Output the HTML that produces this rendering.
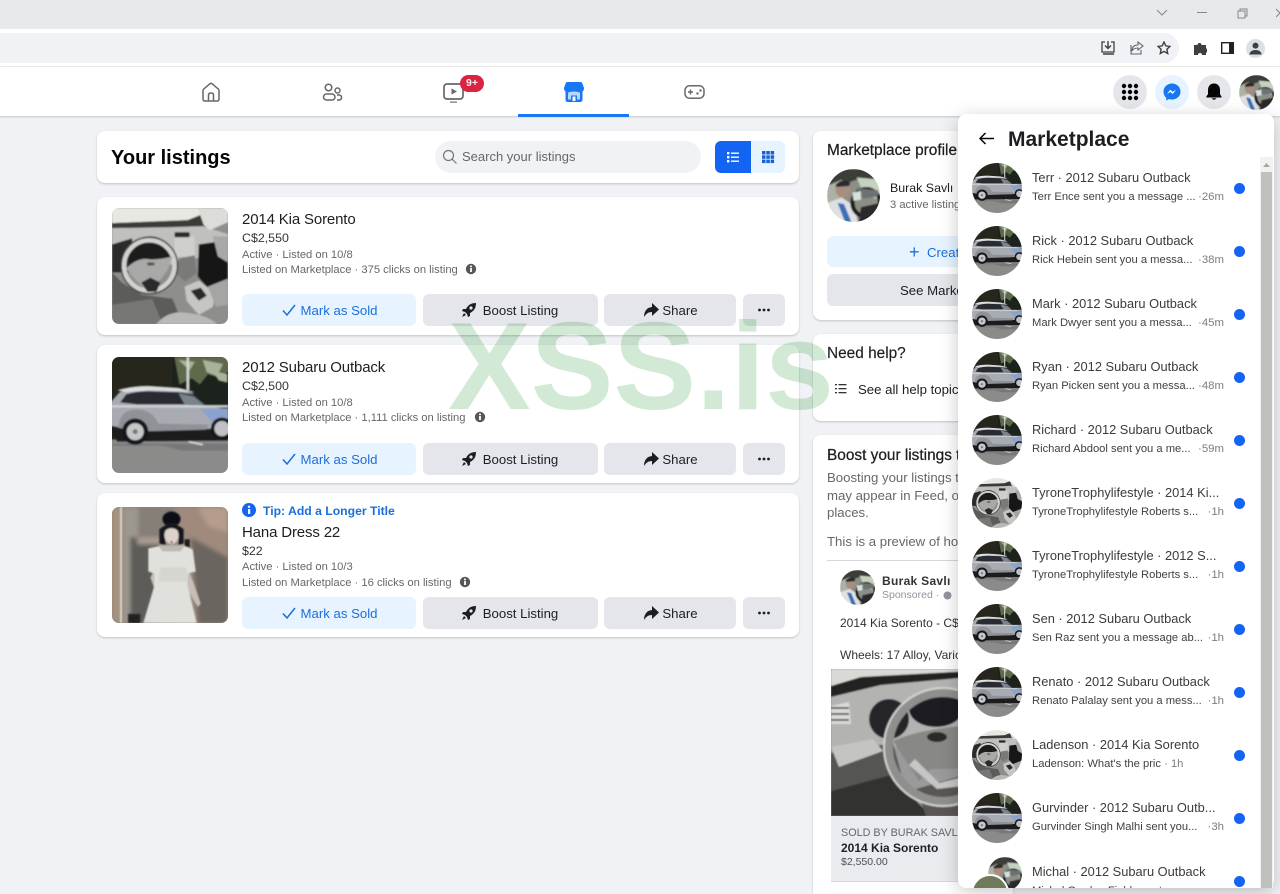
<!DOCTYPE html>
<html lang="en"><head><meta charset="utf-8"><title>Your listings</title>
<style>
html,body{margin:0;padding:0;width:1280px;height:894px;overflow:hidden}
body{position:relative;background:#f0f2f5;font-family:"Liberation Sans",sans-serif;color:#1c1e21}
.a{position:absolute}
.t{position:absolute;white-space:nowrap}
.card{position:absolute;background:#fff;border-radius:8px;box-shadow:0 1px 2px rgba(0,0,0,.2)}
.img{position:absolute;width:116px;height:116px;border-radius:7px;overflow:hidden;left:112px}
.btn{position:absolute;height:32px;border-radius:6px;background:#e4e6eb;font-size:13.2px;line-height:34px;text-align:center;white-space:nowrap;color:#1c1e21}
.blue{background:#e7f3ff;color:#1b6fdc}
.bm{width:174px;left:242px}.bb{width:175px;left:423px}.bs{width:132px;left:604px}.bx{width:42px;left:743px}
.btn svg{position:absolute;top:8px}
.ti{font-size:15px;letter-spacing:-.15px;line-height:18px;color:#1c1e21;left:242px}
.pr{font-size:12.4px;line-height:16px;left:242px;color:#33353a}
.me{font-size:11.2px;line-height:14px;left:242px;color:#65676b}
.h{font-size:15.4px;line-height:18px;-webkit-text-stroke:.25px #1c1e21;left:827px}
.g{font-size:13.2px;line-height:17px;color:#65676b;left:827px}
.av{position:absolute;left:972px;width:50px;height:50px;border-radius:50%;overflow:hidden}
.rt{position:absolute;left:1032px;font-size:12.85px;line-height:16px;white-space:nowrap;color:#3a3b3d}
.rs{position:absolute;left:1032px;font-size:11.2px;line-height:14px;white-space:nowrap;color:#3f4145}
.rm{position:absolute;right:56px;font-size:11.4px;line-height:14px;color:#7a7c80;white-space:nowrap}
.dot{position:absolute;left:1234px;width:11px;height:11px;border-radius:50%;background:#1464f4}
svg{display:block}
</style></head><body>

<svg width="0" height="0" style="position:absolute">
<defs>
<filter id="b" x="-5%" y="-5%" width="110%" height="110%"><feGaussianBlur stdDeviation=".7"/></filter>
<filter id="c" x="-5%" y="-5%" width="110%" height="110%"><feGaussianBlur stdDeviation="2"/></filter>
<symbol id="car" viewBox="0 0 115 115"><g filter="url(#b)">
<rect x="-3" y="-3" width="121" height="121" fill="#1e201b"/>
<path d="M0 0h60v30l-60 12z" fill="#25261f"/>
<path d="M62 0h55v14l-12 6-10-3-8 10-8-6-12 6z" fill="#5f6a4d"/>
<path d="M66 3l16 2-5 8zM90 3l20 4-6 12-10-4zM100 14l14 3v8l-8-2z" fill="#aab29a"/>
<rect x="74" y="0" width="2.4" height="33" fill="#d8d8d2"/>
<rect x="-3" y="82" width="121" height="36" fill="#8b8b8a"/>
<path d="M0 86h115v7H70L50 88H0z" fill="#77787a"/>
<path d="M76 84l14 3" stroke="#ddd" stroke-width="1.6"/>
<path d="M0 72h115v11l-110 1z" fill="#1b1b1e"/>
<path d="M-2 46l10-11q10-4 26-4l32 1 14 4 13 12 22 4v14l-12 5-76 2-29-5z" fill="#a8acb2"/>
<path d="M88 52l27-1v14l-12 3z" fill="#8aa3ce"/>
<path d="M-2 48h117v2H-2z" fill="#d3d5d8"/>
<path d="M8 45l6-8q10-3 22-3l30 1 16 2 12 11-24-1-45 0z" fill="#2a2b30"/>
<path d="M66 36l15 3 11 9-20-1z" fill="#78838c"/>
<path d="M6 33q14-4 30-4l30 2 16 4-16-1-30-1-22 2z" fill="#dcdee0"/>
<path d="M6 70q2-18 18-18t22 14l50 1 1-2-4 7-70 2z" fill="#8f9297"/>
<circle cx="23" cy="74" r="13" fill="#17171a"/><circle cx="23" cy="74" r="8.5" fill="#c5c7c9"/><circle cx="23" cy="74" r="2.5" fill="#777"/>
<circle cx="109" cy="71" r="11" fill="#17171a"/><circle cx="109" cy="71" r="7.5" fill="#bfc1c4"/>
</g></symbol>

<symbol id="int" viewBox="0 0 115 115"><g filter="url(#b)">
<rect x="-3" y="-3" width="121" height="121" fill="#8e8e8c"/>
<path d="M0 0h105L75 12 0 15z" fill="#e8e8e2"/>
<path d="M0 15l75-3 30-12h10v10L95 20l-40 3L0 22z" fill="#3a3a38"/>
<path d="M0 20l60-1 30-1 25 8v18l-25 4-30 8L0 58z" fill="#c0c0be"/>
<path d="M85 0h30v14l-18 8-6-5z" fill="#dcdcd9"/>
<path d="M0 36l20-6v34H0z" fill="#2a2a2a"/>
<path d="M14 46q6-16 23-18 16 0 24 16l-6 16H20z" fill="#1e1e1e"/>
<rect x="62" y="28" width="20" height="20" rx="2" fill="#cfcfcc"/><rect x="62" y="24" width="15" height="5" rx="1" fill="#2b2b2b"/>
<path d="M66 50l16-3 2 18-12 8-8-8z" fill="#7a7a78"/>
<path d="M86 36l29-4v54l-18-4-12-14z" fill="#141414"/>
<path d="M100 28h15v26l-10-6z" fill="#a8a8a6"/>
<path d="M72 78l14-6 16 12-2 14-14 8-12-14z" fill="#c6c6c3"/>
<path d="M78 82l10-3 6 8-8 5z" fill="#2a2a2a"/>
<path d="M95 78l20-8v26l-12 2z" fill="#a5a5a2"/>
<path d="M0 64l10 10 20 12 30 4 10 25H0z" fill="#5c5c5a"/>
<path d="M0 96l40-6 10 25H0z" fill="#777775"/>
<path d="M44 115q12-14 30-11 20 2 30 11z" fill="#b9b9b6"/>
<circle cx="37" cy="57" r="25" fill="none" stroke="#d2d2cf" stroke-width="4.500"/>
<circle cx="37" cy="57" r="28" fill="none" stroke="#3c3c3c" stroke-width="1.400"/>
<path d="M14 60q12-12 24-9 12 0 22-3l-5 14-13 17H31L22 70z" fill="#a9a9a7"/>
<path d="M29 74l6 9h9l4-9-10-5z" fill="#2a2a2a"/>
<rect x="35" y="54" width="7" height="3" fill="#555"/>
</g></symbol>

<symbol id="dress" viewBox="0 0 115 115"><rect x="-3" y="-3" width="121" height="121" fill="#8f8278"/>
<g filter="url(#c)">
<path d="M0 0h9v115H0z" fill="#a8927f"/>
<path d="M11 0h18v115H11z" fill="#9c978f"/>
<path d="M18 30h32v85H18z" fill="#5d5c59"/>
<path d="M26 0h36v32H26z" fill="#857f78"/>
<path d="M25 30h28v7H25z" fill="#ab9d91"/>
<path d="M62 0h53v115H62z" fill="#a08a7c"/>
<path d="M78 30l37 20v65H85z" fill="#6a655e"/>
<path d="M85 0h30v25l-20-6z" fill="#b59c8b"/>
</g>
<g filter="url(#b)">
<rect x="8" y="0" width="1.800" height="115" fill="#e0ded9"/>
<rect x="16" y="106" width="12" height="9" fill="#222220"/>
<rect x="72" y="32" width="5" height="8" fill="#1a1a1a"/>
<ellipse cx="59" cy="12" rx="9" ry="7.500" fill="#111115"/>
<path d="M47 36V22q12-10 24 0v14l-5 2V30H53v8z" fill="#15151a"/>
<ellipse cx="59" cy="28" rx="7" ry="9" fill="#dbd2cc"/>
<path d="M52 24q7-6 14 0l-2-8h-10z" fill="#15151a"/>
<circle cx="59" cy="35" r="1.200" fill="#8a3f3f"/>
<path d="M44 58l-6 12 8 22 4-2-5-20z" fill="#c6beb8"/><path d="M74 58l8 20 6 18-3 3-12-20z" fill="#c6beb8"/>
<path d="M36 41l14-3h20l10 4 3 22-8 2 0 12 9 37H31l11-37 0-12-6-2z" fill="#e0e0dc"/>
<path d="M46 38h26l-4 6H50z" fill="#bcb9b4"/>
<path d="M48 60h26v14H46z" fill="#d6d6d1"/>
</g></symbol>

<symbol id="me" viewBox="0 0 50 50"><g filter="url(#b)">
<rect width="50" height="50" fill="#8c8f85"/>
<path d="M0 0h50v14L28 10 0 20z" fill="#3b3d38"/>
<path d="M28 8l22 2v20l-16-8z" fill="#c6d2c0"/>
<path d="M0 16l14-6v34H0z" fill="#aeb1a6"/>
<ellipse cx="15" cy="19" rx="7" ry="8" fill="#a88e7e"/>
<path d="M8 15q6-7 14-2l-1 3-12 1z" fill="#2b2b2a"/>
<path d="M0 32l14-5 12 8 3 15H0z" fill="#dfe0e2"/>
<path d="M10 32l6 1 7 17h-6z" fill="#3b6fb8"/>
<circle cx="37" cy="32" r="13" fill="none" stroke="#1d1d1f" stroke-width="4"/>
<path d="M28 18l20 2v6l-14 2z" fill="#6d7270"/>
<path d="M32 36l18-4v18H30z" fill="#2a2a2a"/>
<path d="M24 22l8-1v8l-7 1z" fill="#d7e0dd"/>
</g></symbol>

<symbol id="rocket" viewBox="0 0 16 16"><path d="M15 1c-5 0-8 2-10 6H2L1 9l3 1 2 2 1 3 2-1V11c4-2 6-5 6-10z" fill="#1c1e21"/><circle cx="10" cy="6" r="1.6" fill="#e4e6eb"/><path d="M3 11l-2 4 4-2z" fill="#1c1e21"/></symbol>
<symbol id="share" viewBox="0 0 16 16"><path d="M9 1l7 6.5L9 14v-4C5 10 3 12 1 15c0-6 3-9.500 8-10z" fill="#1c1e21"/></symbol>
<symbol id="check" viewBox="0 0 16 16"><path d="M2 8.500l4 4.500 8-10" fill="none" stroke="#1b6fdc" stroke-width="1.500"/></symbol>
<symbol id="dots" viewBox="0 0 16 16"><circle cx="3.500" cy="8" r="1.400" fill="#1c1e21"/><circle cx="8" cy="8" r="1.400" fill="#1c1e21"/><circle cx="12.500" cy="8" r="1.400" fill="#1c1e21"/></symbol>
<symbol id="info" viewBox="0 0 12 12"><circle cx="6" cy="6" r="5.200" fill="#55575c"/><rect x="5.100" y="5" width="1.800" height="4" fill="#fff"/><circle cx="6" cy="3.400" r="1" fill="#fff"/></symbol>
</defs></svg>

<!-- browser chrome -->
<div class="a" style="left:0;top:0;width:1280px;height:29px;background:#e7e9ec"></div>
<div class="a" style="left:0;top:29px;width:1280px;height:38px;background:#fff"></div>
<div class="a" style="left:-20px;top:33px;width:1199px;height:30px;background:#f0f2f5;border-radius:15px"></div>
<div class="a" style="left:0;top:66px;width:1280px;height:1px;background:#ececec"></div>
<svg class="a" style="left:1155px;top:8px" width="14" height="10"><path d="M2 2l5 5 5-5" fill="none" stroke="#85878b" stroke-width="1"/></svg>
<div class="a" style="left:1197px;top:12px;width:10px;height:1px;background:#85878b"></div>
<svg class="a" style="left:1236px;top:7px" width="12" height="12"><path d="M2 4h7v7H2zM4 4V2h7v7H9" fill="none" stroke="#85878b"/></svg>
<svg class="a" style="left:1276px;top:8px" width="4" height="10"><path d="M0 1l8 8M0 9l8-8" fill="none" stroke="#85878b"/></svg>
<svg class="a" style="left:1100px;top:40px" width="16" height="16"><path d="M5 2H2v10h12V2h-3" fill="none" stroke="#3c4043" stroke-width="1.300"/><path d="M8 1v7M5 5.500L8 8.500l3-3M3 14h11" fill="none" stroke="#3c4043" stroke-width="1.400"/></svg>
<svg class="a" style="left:1129px;top:41px" width="16" height="15"><path d="M9 1l5 4-5 4V7C6 7 4 8 3 10c0-4 2-6 6-6zM2 4v9h10V9" fill="none" stroke="#5f6368" stroke-width="1.100"/></svg>
<svg class="a" style="left:1157px;top:41px" width="14" height="14"><path d="M7 1l1.800 3.900 4.200.5-3.100 2.900.8 4.200L7 10.400 3.300 12.500l.8-4.200L1 5.400l4.200-.5z" fill="none" stroke="#3c4043" stroke-width="1.400"/></svg>
<svg class="a" style="left:1193px;top:41px" width="14" height="14"><path d="M1 4h3.500a2 2 0 1 1 4 0H13v3.500a2 2 0 1 1 0 4V14H9a2 2 0 1 0-4 0H1z" fill="#3c4043"/></svg>
<svg class="a" style="left:1221px;top:42px" width="13" height="12"><rect x=".7" y=".7" width="11.600" height="10.600" fill="none" stroke="#222" stroke-width="1.400"/><rect x="8" y="1" width="4" height="10" fill="#222"/></svg>
<div class="a" style="left:1246px;top:39px;width:19px;height:19px;border-radius:50%;background:#dcdfe3"></div>
<svg class="a" style="left:1249px;top:42px" width="13" height="13"><circle cx="6.500" cy="3.600" r="3" fill="#3c4043"/><path d="M.5 12.500c0-6 12-6 12 0z" fill="#3c4043"/></svg>

<!-- nav -->
<div class="a" style="left:0;top:67px;width:1280px;height:49px;background:#fff;box-shadow:0 1px 2px rgba(0,0,0,.18)"></div>
<svg class="a" style="left:201px;top:82px" width="20" height="20"><path d="M2 17V8.500Q2 7.500 3 6.800L8.800 1.800Q10 1 11.200 1.800L17 6.800Q18 7.500 18 8.500V17Q18 19 16 19H4Q2 19 2 17ZM7.500 19v-6q0-2 2.500-2t2.500 2v6" fill="none" stroke="#65676b" stroke-width="1.500"/></svg>
<svg class="a" style="left:322px;top:83px" width="21" height="18"><circle cx="6.500" cy="4.500" r="3.300" fill="none" stroke="#65676b" stroke-width="1.500"/><circle cx="15.500" cy="7.500" r="2.500" fill="none" stroke="#65676b" stroke-width="1.500"/><rect x="1.500" y="11" width="11.500" height="6" rx="3" fill="none" stroke="#65676b" stroke-width="1.500"/><path d="M15 12h2q2.500 0 2.500 2.500T17 17h-2" fill="none" stroke="#65676b" stroke-width="1.500"/></svg>
<svg class="a" style="left:442px;top:82px" width="24" height="22"><rect x="2" y="2" width="19" height="15" rx="3" fill="none" stroke="#65676b" stroke-width="1.700"/><path d="M9.500 6.500l5.500 3-5.500 3z" fill="#65676b"/><rect x="8" y="19.300" width="7" height="1.700" fill="#9a9b9e"/></svg>
<div class="a" style="left:460px;top:75px;width:24px;height:17px;border-radius:9px;background:#dc2340;color:#f2f2f2;font-size:10.500px;font-weight:bold;line-height:17px;text-align:center">9+</div>
<svg class="a" style="left:564px;top:82px" width="20" height="20"><path d="M3.500 0H16.500Q17.800 0 18.300 1.200L20 6Q20 10 16.500 10H3.500Q0 10 0 6L1.700 1.200Q2.200 0 3.500 0Z" fill="#1877f2"/><path d="M1.500 9H18.500V17.500Q18.500 20 16 20H4Q1.500 20 1.500 17.500Z" fill="#1877f2"/><path d="M4 10.500q6-2 12 0V17.500H13V13.500H7V17.500H4z" fill="#b7d5fa"/><path d="M8.500 19v-4.500h3V19" fill="#f5f9ff"/></svg>
<div class="a" style="left:518px;top:114px;width:111px;height:3px;background:#1877f2"></div>
<svg class="a" style="left:684px;top:85px" width="21" height="14"><rect x="1" y=".8" width="19" height="12.400" rx="4.500" fill="none" stroke="#65676b" stroke-width="1.500"/><path d="M4 7h5M6.500 4.500v5" stroke="#65676b" stroke-width="1.400"/><circle cx="13.500" cy="8.500" r="1.200" fill="#65676b"/><circle cx="16.500" cy="5.500" r="1.200" fill="#65676b"/></svg>

<!-- top right buttons -->
<div class="a" style="left:1113px;top:75px;width:34px;height:34px;border-radius:50%;background:#e4e6eb"></div>
<svg class="a" style="left:1121px;top:83px" width="18" height="18" fill="#050505"><circle cx="3" cy="3" r="2.200"/><circle cx="9" cy="3" r="2.200"/><circle cx="15" cy="3" r="2.200"/><circle cx="3" cy="9" r="2.200"/><circle cx="9" cy="9" r="2.200"/><circle cx="15" cy="9" r="2.200"/><circle cx="3" cy="15" r="2.200"/><circle cx="9" cy="15" r="2.200"/><circle cx="15" cy="15" r="2.200"/></svg>
<div class="a" style="left:1155px;top:75px;width:34px;height:34px;border-radius:50%;background:#e7f3ff"></div>
<svg class="a" style="left:1163px;top:83px" width="18" height="18"><path d="M9 .5C4.200.5.500 4 .5 8.700c0 2.500 1 4.600 2.700 6v2.800l2.600-1.400c1 .3 2 .4 3.200.4 4.800 0 8.500-3.500 8.500-7.800C17.500 4 13.800.5 9 .5Z" fill="#1877f2"/><path d="M4 11l3.200-4.200 2.500 2 3.300-2-3.200 4.200-2.500-2z" fill="#fff"/></svg>
<div class="a" style="left:1197px;top:75px;width:34px;height:34px;border-radius:50%;background:#e4e6eb"></div>
<svg class="a" style="left:1205px;top:83px" width="18" height="18"><path d="M9 .5C5 .5 3 3.500 3 7v4L1.300 13.700c-.2.500 0 .8.600.8H16c.6 0 .8-.3.600-.8L15 11V7C15 3.500 13 .5 9 .5Z" fill="#050505"/><path d="M6.500 15.300q2.500 3 5 0z" fill="#050505"/></svg>
<div class="a" style="left:1239px;top:75px;width:35px;height:35px;border-radius:50%;overflow:hidden"><svg width="35" height="35"><use href="#me"/></svg></div>

<!-- header card -->
<div class="card" style="left:97px;top:131px;width:702px;height:52px"></div>
<div class="t" style="left:111px;top:146px;font-size:20px;font-weight:bold;line-height:25px;color:#050505">Your listings</div>
<div class="a" style="left:435px;top:141px;width:266px;height:32px;border-radius:16px;background:#f0f2f5"></div>
<svg class="a" style="left:442px;top:149px" width="16" height="16"><circle cx="6.500" cy="6.500" r="5" fill="none" stroke="#777" stroke-width="1.200"/><path d="M10.200 10.200l4.300 4.300" stroke="#777" stroke-width="1.200"/></svg>
<div class="t" style="left:462px;top:149px;font-size:13px;line-height:16px;color:#65676b">Search your listings</div>
<div class="a" style="left:715px;top:141px;width:36px;height:32px;border-radius:6px 0 0 6px;background:#1464f4"></div>
<div class="a" style="left:751px;top:141px;width:34px;height:32px;border-radius:0 6px 6px 0;background:#e7f3ff"></div>
<svg class="a" style="left:726px;top:151px" width="14" height="12" fill="#fff"><rect x="1" y="1" width="2.400" height="2.400"/><rect x="1" y="5" width="2.400" height="2.400"/><rect x="1" y="9" width="2.400" height="2.400"/><rect x="5" y="1.500" width="8" height="1.400"/><rect x="5" y="5.500" width="8" height="1.400"/><rect x="5" y="9.500" width="8" height="1.400"/></svg>
<svg class="a" style="left:761px;top:150px" width="14" height="14" fill="#1761d6"><rect x="1" y="1" width="3.500" height="3.500"/><rect x="5.300" y="1" width="3.500" height="3.500"/><rect x="9.600" y="1" width="3.500" height="3.500"/><rect x="1" y="5.300" width="3.500" height="3.500"/><rect x="5.300" y="5.300" width="3.500" height="3.500"/><rect x="9.600" y="5.300" width="3.500" height="3.500"/><rect x="1" y="9.600" width="3.500" height="3.500"/><rect x="5.300" y="9.600" width="3.500" height="3.500"/><rect x="9.600" y="9.600" width="3.500" height="3.500"/></svg>

<!-- listing 1 -->
<div class="card" style="left:97px;top:197px;width:702px;height:138px"></div>
<div class="img" style="top:208px"><svg width="116" height="116"><use href="#int"/></svg></div>
<div class="t ti" style="top:211px">2014 Kia Sorento</div>
<div class="t pr" style="top:230px">C$2,550</div>
<div class="t me" style="top:248px">Active · Listed on 10/8</div>
<div class="t me" style="top:263px">Listed on Marketplace · 375 clicks on listing</div>
<svg class="a" style="left:465px;top:263px" width="12" height="12"><use href="#info"/></svg>
<div class="btn blue bm" style="top:294px"><svg style="left:39px" width="16" height="16"><use href="#check"/></svg><span style="margin-left:20px">Mark as Sold</span></div>
<div class="btn bb" style="top:294px"><svg style="left:38px" width="16" height="16"><use href="#rocket"/></svg><span style="margin-left:20px">Boost Listing</span></div>
<div class="btn bs" style="top:294px"><svg style="left:39px" width="16" height="16"><use href="#share"/></svg><span style="margin-left:20px">Share</span></div>
<div class="btn bx" style="top:294px"><svg style="left:13px" width="16" height="16"><use href="#dots"/></svg></div>

<!-- listing 2 -->
<div class="card" style="left:97px;top:345px;width:702px;height:138px"></div>
<div class="img" style="top:357px"><svg width="116" height="116"><use href="#car"/></svg></div>
<div class="t ti" style="top:359px">2012 Subaru Outback</div>
<div class="t pr" style="top:378px">C$2,500</div>
<div class="t me" style="top:396px">Active · Listed on 10/8</div>
<div class="t me" style="top:411px">Listed on Marketplace · 1,111 clicks on listing</div>
<svg class="a" style="left:474px;top:411px" width="12" height="12"><use href="#info"/></svg>
<div class="btn blue bm" style="top:443px"><svg style="left:39px" width="16" height="16"><use href="#check"/></svg><span style="margin-left:20px">Mark as Sold</span></div>
<div class="btn bb" style="top:443px"><svg style="left:38px" width="16" height="16"><use href="#rocket"/></svg><span style="margin-left:20px">Boost Listing</span></div>
<div class="btn bs" style="top:443px"><svg style="left:39px" width="16" height="16"><use href="#share"/></svg><span style="margin-left:20px">Share</span></div>
<div class="btn bx" style="top:443px"><svg style="left:13px" width="16" height="16"><use href="#dots"/></svg></div>

<!-- listing 3 -->
<div class="card" style="left:97px;top:493px;width:702px;height:144px"></div>
<div class="img" style="top:507px"><svg width="116" height="116"><use href="#dress"/></svg></div>
<svg class="a" style="left:242px;top:503px" width="14" height="14"><circle cx="7" cy="7" r="7" fill="#1464f4"/><rect x="6" y="6" width="2.200" height="5" fill="#fff"/><circle cx="7" cy="3.800" r="1.200" fill="#fff"/></svg>
<div class="t" style="left:263px;top:504px;font-size:12.2px;font-weight:bold;line-height:14px;color:#1b6fdc">Tip: Add a Longer Title</div>
<div class="t ti" style="top:524px">Hana Dress 22</div>
<div class="t pr" style="top:543px">$22</div>
<div class="t me" style="top:560px">Active · Listed on 10/3</div>
<div class="t me" style="top:576px">Listed on Marketplace · 16 clicks on listing</div>
<svg class="a" style="left:459px;top:576px" width="12" height="12"><use href="#info"/></svg>
<div class="btn blue bm" style="top:597px"><svg style="left:39px" width="16" height="16"><use href="#check"/></svg><span style="margin-left:20px">Mark as Sold</span></div>
<div class="btn bb" style="top:597px"><svg style="left:38px" width="16" height="16"><use href="#rocket"/></svg><span style="margin-left:20px">Boost Listing</span></div>
<div class="btn bs" style="top:597px"><svg style="left:39px" width="16" height="16"><use href="#share"/></svg><span style="margin-left:20px">Share</span></div>
<div class="btn bx" style="top:597px"><svg style="left:13px" width="16" height="16"><use href="#dots"/></svg></div>

<!-- right column -->
<div class="card" style="left:813px;top:131px;width:200px;height:189px"></div>
<div class="t h" style="top:142px">Marketplace profile</div>
<div class="a" style="left:827px;top:169px;width:53px;height:53px;border-radius:50%;overflow:hidden"><svg width="53" height="53"><use href="#me"/></svg></div>
<div class="t" style="left:890px;top:181px;font-size:12.4px;line-height:15px;color:#1c1e21">Burak Savlı</div>
<div class="t" style="left:890px;top:198px;font-size:11.2px;line-height:14px;color:#65676b">3 active listings</div>
<div class="btn blue" style="left:827px;top:236px;width:200px;height:31px;text-align:left"><span class="a" style="left:82px;top:-1px;font-size:18px">+</span><span class="a" style="left:100px;top:0">Create</span></div>
<div class="btn" style="left:827px;top:274px;width:200px;height:32px;text-align:left"><span class="a" style="left:73px;top:0">See Marketplace</span></div>

<div class="card" style="left:813px;top:334px;width:200px;height:87px"></div>
<div class="t h" style="top:345px;-webkit-text-stroke:.15px #1c1e21">Need help?</div>
<svg class="a" style="left:835px;top:383px" width="12" height="12" fill="#333"><rect x="0" y="1" width="2" height="1.300"/><rect x="3.500" y="1" width="8" height="1.300"/><rect x="0" y="5" width="2" height="1.300"/><rect x="3.500" y="5" width="8" height="1.300"/><rect x="0" y="9" width="2" height="1.300"/><rect x="3.500" y="9" width="8" height="1.300"/></svg>
<div class="t" style="left:858px;top:382px;font-size:13.200px;line-height:16px">See all help topics</div>

<div class="card" style="left:813px;top:435px;width:200px;height:470px"></div>
<div class="t h" style="top:447px">Boost your listings to</div>
<div class="t g" style="top:469px">Boosting your listings to</div>
<div class="t g" style="top:487px">may appear in Feed, on</div>
<div class="t g" style="top:504px">places.</div>
<div class="t g" style="top:533px">This is a preview of how</div>
<div class="a" style="left:827px;top:560px;width:140px;height:1px;background:#d5d7da"></div>
<div class="a" style="left:840px;top:570px;width:35px;height:35px;border-radius:50%;overflow:hidden"><svg width="35" height="35"><use href="#me"/></svg></div>
<div class="t" style="left:882px;top:574px;font-size:12px;font-weight:bold;line-height:14px;letter-spacing:.3px;color:#333">Burak Savlı</div>
<div class="t" style="left:882px;top:589px;font-size:10.500px;line-height:13px;color:#90949c">Sponsored ·</div>
<svg class="a" style="left:943px;top:591px" width="9" height="9"><circle cx="4.500" cy="4.500" r="4" fill="#90949c"/></svg>
<div class="t" style="left:840px;top:616px;font-size:12px;line-height:15px;color:#333">2014 Kia Sorento - C$2,550</div>
<div class="t" style="left:840px;top:648px;font-size:12px;line-height:15px;color:#333">Wheels: 17 Alloy, Various</div>
<div class="a" style="left:831px;top:669px;width:140px;height:147px;overflow:hidden;background:#8d8d8d">
<svg width="140" height="147" viewBox="0 0 140 147"><g filter="url(#b)">
<rect width="140" height="147" fill="#9a9a9a"/>
<path d="M0 0h140v4L30 10 0 20z" fill="#d9d9d5"/>
<path d="M0 17L30 8l110-6v8L50 18 0 30z" fill="#222"/>
<path d="M0 28L50 16l90-8v70H0z" fill="#b3b3b1"/>
<ellipse cx="58" cy="50" rx="20" ry="20" fill="#26282a"/>
<ellipse cx="105" cy="40" rx="27" ry="18" fill="#1d1e20"/>
<path d="M0 37l18-4 2 22H0z" fill="#dadad8"/>
<path d="M0 39h18M0 45h18M0 51h18" stroke="#333" stroke-width="1.600"/>
<path d="M0 84l62-10 8 30-70 18z" fill="#555553"/>
<path d="M0 78l42-8 10 12-44 16z" fill="#c4c4c1"/>
<path d="M0 122l60-16 40 41H0z" fill="#33332f"/>
<path d="M85 120l55-16v43H95z" fill="#5a5753"/>
<circle cx="112" cy="78" r="54" fill="none" stroke="#8f8f8d" stroke-width="8"/>
<circle cx="112" cy="78" r="59" fill="none" stroke="#d3d3d1" stroke-width="2"/>
<path d="M62 72q26-12 78-16v44h-40l-12 12z" fill="#888886"/>
<ellipse cx="106" cy="68" rx="10" ry="5" fill="#2a2a2a"/>
<path d="M84 90l24 24 32-8v10l-34 4-28-24z" fill="#c6c6c4"/>
</g></svg></div>
<div class="a" style="left:831px;top:816px;width:140px;height:65px;background:#e9ebee;border-bottom:1px solid #d5d7da"></div>
<div class="t" style="left:841px;top:826px;font-size:10.800px;line-height:14px;color:#606770">SOLD BY BURAK SAVLI</div>
<div class="t" style="left:841px;top:841px;font-size:12px;font-weight:bold;line-height:15px;color:#1d2129">2014 Kia Sorento</div>
<div class="t" style="left:841px;top:856px;font-size:10.500px;line-height:13px;color:#4b4f56">$2,550.00</div>

<!-- watermark -->
<div class="t" style="left:448px;top:296px;font-size:124px;font-weight:bold;line-height:142px;color:#d2ead5;mix-blend-mode:multiply;pointer-events:none">XSS.is</div>

<!-- messenger panel -->
<div class="a" style="left:958px;top:114px;width:316px;height:774px;background:#fff;border-radius:8px;box-shadow:0 4px 18px rgba(0,0,0,.22)"></div>
<svg class="a" style="left:978px;top:131px" width="17" height="15"><path d="M16 7.500H2M7.500 2L2 7.500 7.500 13" fill="none" stroke="#050505" stroke-width="1.500"/></svg>
<div class="t" style="left:1008px;top:127px;font-size:21px;font-weight:bold;line-height:26px;color:#1c1e21">Marketplace</div>
<div class="a" style="left:1260px;top:157px;width:13px;height:731px;background:#f1f1f1"></div>
<div class="a" style="left:1261px;top:172px;width:11px;height:716px;background:#c0c0bd"></div>
<svg class="a" style="left:1262px;top:162px" width="9" height="6"><path d="M1 5l3.500-4L8 5z" fill="#a5a5a5"/></svg>

<div class="av" style="top:163px"><svg width="50" height="50"><use href="#car"/></svg></div>
<div class="rt" style="top:170px">Terr · 2012 Subaru Outback</div><div class="rs" style="top:190px">Terr Ence sent you a message ...</div><div class="rm" style="top:190px">·26m</div><div class="dot" style="top:183px"></div>

<div class="av" style="top:226px"><svg width="50" height="50"><use href="#car"/></svg></div>
<div class="rt" style="top:233px">Rick · 2012 Subaru Outback</div><div class="rs" style="top:253px">Rick Hebein sent you a messa...</div><div class="rm" style="top:253px">·38m</div><div class="dot" style="top:246px"></div>

<div class="av" style="top:289px"><svg width="50" height="50"><use href="#car"/></svg></div>
<div class="rt" style="top:296px">Mark · 2012 Subaru Outback</div><div class="rs" style="top:316px">Mark Dwyer sent you a messa...</div><div class="rm" style="top:316px">·45m</div><div class="dot" style="top:309px"></div>

<div class="av" style="top:352px"><svg width="50" height="50"><use href="#car"/></svg></div>
<div class="rt" style="top:359px">Ryan · 2012 Subaru Outback</div><div class="rs" style="top:379px">Ryan Picken sent you a messa...</div><div class="rm" style="top:379px">·48m</div><div class="dot" style="top:372px"></div>

<div class="av" style="top:415px"><svg width="50" height="50"><use href="#car"/></svg></div>
<div class="rt" style="top:422px">Richard · 2012 Subaru Outback</div><div class="rs" style="top:442px">Richard Abdool sent you a me...</div><div class="rm" style="top:442px">·59m</div><div class="dot" style="top:435px"></div>

<div class="av" style="top:478px"><svg width="50" height="50"><use href="#int"/></svg></div>
<div class="rt" style="top:485px">TyroneTrophylifestyle · 2014 Ki...</div><div class="rs" style="top:505px">TyroneTrophylifestyle Roberts s...</div><div class="rm" style="top:505px">·1h</div><div class="dot" style="top:498px"></div>

<div class="av" style="top:541px"><svg width="50" height="50"><use href="#car"/></svg></div>
<div class="rt" style="top:548px">TyroneTrophylifestyle · 2012 S...</div><div class="rs" style="top:568px">TyroneTrophylifestyle Roberts s...</div><div class="rm" style="top:568px">·1h</div><div class="dot" style="top:561px"></div>

<div class="av" style="top:604px"><svg width="50" height="50"><use href="#car"/></svg></div>
<div class="rt" style="top:611px">Sen · 2012 Subaru Outback</div><div class="rs" style="top:631px">Sen Raz sent you a message ab...</div><div class="rm" style="top:631px">·1h</div><div class="dot" style="top:624px"></div>

<div class="av" style="top:667px"><svg width="50" height="50"><use href="#car"/></svg></div>
<div class="rt" style="top:674px">Renato · 2012 Subaru Outback</div><div class="rs" style="top:694px">Renato Palalay sent you a mess...</div><div class="rm" style="top:694px">·1h</div><div class="dot" style="top:687px"></div>

<div class="av" style="top:730px"><svg width="50" height="50"><use href="#int"/></svg></div>
<div class="rt" style="top:737px">Ladenson · 2014 Kia Sorento</div><div class="rs" style="top:757px">Ladenson: What's the pric <span style="color:#7a7c80">· 1h</span></div><div class="dot" style="top:750px"></div>

<div class="av" style="top:793px"><svg width="50" height="50"><use href="#car"/></svg></div>
<div class="rt" style="top:800px">Gurvinder · 2012 Subaru Outb...</div><div class="rs" style="top:820px">Gurvinder Singh Malhi sent you...</div><div class="rm" style="top:820px">·3h</div><div class="dot" style="top:813px"></div>

<div class="a" style="left:958px;top:850px;width:302px;height:38px;overflow:hidden;border-radius:0 0 0 8px">
<div class="a" style="left:30px;top:7px;width:34px;height:34px;border-radius:50%;overflow:hidden;"><svg width="34" height="34"><use href="#me"/></svg></div>
<div class="a" style="left:13px;top:24px;width:34px;height:34px;border-radius:50%;background:#6f7a5a;border:2px solid #fff"></div>
<div class="rt" style="left:74px;top:14px">Michal · 2012 Subaru Outback</div>
<div class="rs" style="left:74px;top:34px">Michal Gordon Fields sent ...</div>
<div class="dot" style="left:276px;top:26px"></div>
</div>

</body></html>
